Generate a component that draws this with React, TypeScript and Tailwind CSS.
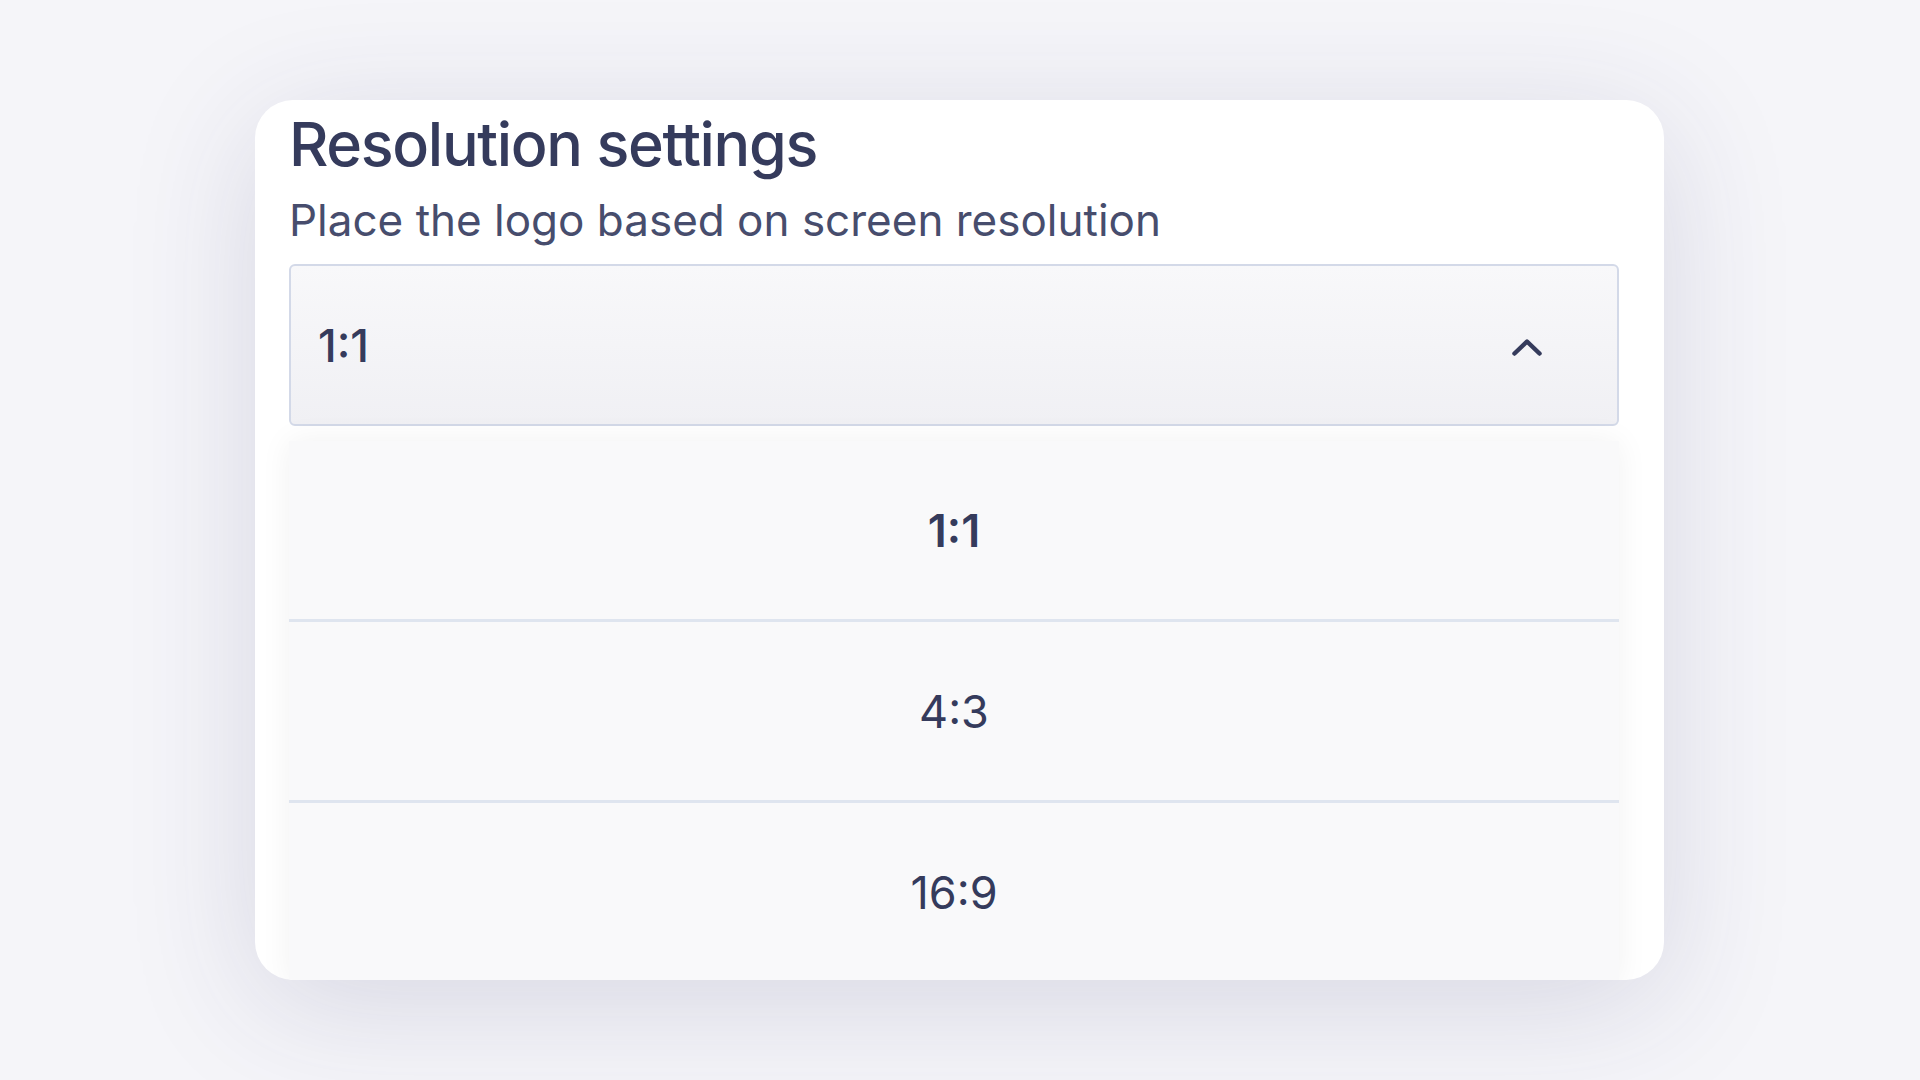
import { useState } from "react";

const options = ["1:1", "4:3", "16:9"];

function ChevronUp() {
  return (
    <svg width="32" height="20" viewBox="0 0 32 20" fill="none" aria-hidden>
      <path d="M3.5 16.5 L16 4.5 L28.5 16.5" stroke="#353b5c" strokeWidth="4.5" strokeLinecap="round" strokeLinejoin="round" />
    </svg>
  );
}

export default function App() {
  const [selected, setSelected] = useState("1:1");
  const [open, setOpen] = useState(true);

  return (
    <div className="w-[1920px] h-[1080px] bg-[#f5f5f9] flex items-start justify-start font-['Inter',sans-serif] text-[#353b5c] overflow-hidden">
      <div className="mt-[100px] ml-[255px] w-[1409px] h-[880px] bg-white rounded-[38px] overflow-hidden shadow-[0_24px_130px_rgba(50,50,100,0.15)] pl-[34px] pr-[45px] pt-[14px] flex flex-col">
        <h1 className="shrink-0 text-[61px] leading-none font-medium tracking-[-0.022em]">Resolution settings</h1>
        <p className="shrink-0 mt-[23px] text-[44px] leading-none text-[#474d6d]">
          Place the logo based on screen resolution
        </p>

        <button
          onClick={() => setOpen(!open)}
          className="shrink-0 mt-[22px] h-[162px] w-full flex items-center justify-between pl-[27px] pr-[74px] border-2 border-[#d3d9e8] rounded-[6px] bg-gradient-to-b from-[#f8f8fa] to-[#f0f0f4]"
        >
          <span className="text-[45px] leading-none font-medium">{selected}</span>
          <span className="mt-[4px]">
            <ChevronUp />
          </span>
        </button>

        {open && (
          <ul className="shrink-0 mt-[15px] w-full shadow-[0_0_30px_rgba(0,0,0,0.06)] bg-[#f9f9fa]">
            {options.map((o) => (
              <li
                key={o}
                onClick={() => setSelected(o)}
                className={`h-[181px] flex items-center justify-center border-b-[3px] border-[#dfe5ef] text-[45px] leading-none cursor-pointer ${
                  o === selected ? "font-semibold" : "font-normal"
                }`}
              >
                {o}
              </li>
            ))}
          </ul>
        )}
      </div>
    </div>
  );
}
